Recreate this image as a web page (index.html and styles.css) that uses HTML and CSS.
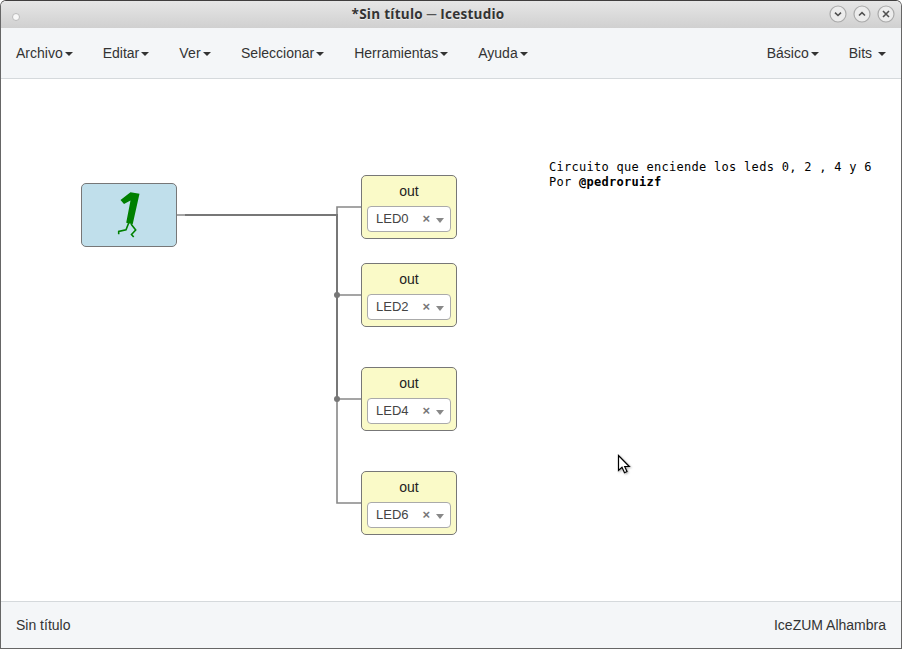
FILE: index.html
```html
<!DOCTYPE html>
<html lang="es">
<head>
<meta charset="utf-8">
<title>*Sin título ─ Icestudio</title>
<link rel="stylesheet" href="styles.css">
</head>
<body>
<div class="window">
  <header class="titlebar">
    <span class="dot"></span>
    <span class="title">*Sin título ─ Icestudio</span>
    <div class="controls">
      <svg class="control" viewBox="0 0 18 18"><circle cx="9" cy="9" r="8"/><path d="M6 7.7l3 2.8 3-2.8"/></svg>
      <svg class="control" viewBox="0 0 18 18"><circle cx="9" cy="9" r="8"/><path d="M6 10.5l3-2.8 3 2.8"/></svg>
      <svg class="control" viewBox="0 0 18 18"><circle cx="9" cy="9" r="8"/><path d="M6 6l6 6M12 6l-6 6"/></svg>
    </div>
  </header>
  <nav class="menubar">
    <a class="item">Archivo<i class="caret"></i></a>
    <a class="item">Editar<i class="caret"></i></a>
    <a class="item view">Ver<i class="caret"></i></a>
    <a class="item">Seleccionar<i class="caret"></i></a>
    <a class="item">Herramientas<i class="caret"></i></a>
    <a class="item">Ayuda<i class="caret"></i></a>
    <span class="spacer"></span>
    <a class="item">Básico<i class="caret"></i></a>
    <a class="item">Bits <i class="caret"></i></a>
  </nav>
  <main class="canvas">
    <svg class="wires" viewBox="0 0 900 522">
      <path d="M184 136H336"/>
      <path class="thin" d="M176 136H184M336 136V128H360M336 216H360M336 320H360M336 320V424H360"/>
      <path d="M336 135V320"/>
      <circle cx="336" cy="216" r="3"/>
      <circle cx="336" cy="320" r="3"/>
    </svg>
    <div class="block constant">
      <svg class="one" viewBox="0 0 40 54">
        <path class="digit" d="M10.5 12L20.5 4.2L29.5 5.7L22.7 36.3L16.2 34.7L20.5 12.5L14 16Z"/>
        <path class="leg" d="M18.7 35L16 41.8L8.7 43.5V46.3M21 36L25.7 42L21.5 46.5L23.7 49"/>
      </svg>
    </div>
    <div class="block output led0"><span class="name">out</span><div class="select"><span class="value">LED0</span><span class="clear">×</span><i class="arrow"></i></div></div>
    <div class="block output led2"><span class="name">out</span><div class="select"><span class="value">LED2</span><span class="clear">×</span><i class="arrow"></i></div></div>
    <div class="block output led4"><span class="name">out</span><div class="select"><span class="value">LED4</span><span class="clear">×</span><i class="arrow"></i></div></div>
    <div class="block output led6"><span class="name">out</span><div class="select"><span class="value">LED6</span><span class="clear">×</span><i class="arrow"></i></div></div>
    <div class="note">Circuito que enciende los leds 0, 2 , 4 y 6<br>Por <b>@pedroruizf</b></div>
    <svg class="cursor" viewBox="0 0 16 22"><path d="M1.5 1.5V16.5L5 13.3L7.5 18.7L10 17.5L7.7 12.5H12.3Z"/></svg>
  </main>
  <footer class="statusbar"><span>Sin título</span><span>IceZUM Alhambra</span></footer>
</div>
</body>
</html>
```
FILE: styles.css
```css
* { box-sizing: border-box; }
body {
  margin: 0;
  background: #fff;
  font: 14px/20px "Liberation Sans", Arial, sans-serif;
  color: #333;
}
.window {
  display: flex;
  flex-direction: column;
  width: 902px;
  height: 649px;
  border: 1px solid #666;
  border-top-color: #403e3e;
  border-radius: 6px 6px 0 0;
  overflow: hidden;
}
.titlebar {
  display: flex;
  align-items: center;
  height: 27px;
  padding: 0 6px 0 11px;
  background: linear-gradient(#e6e6e6, #d0d0d0);
}
.dot {
  width: 8px;
  height: 8px;
  margin-top: 5px;
  border: 1px solid #bbb;
  border-radius: 50%;
  background: #f8f8f8;
}
.title {
  flex: 1;
  padding-left: 7px;
  text-align: center;
  font: 700 13.5px/27px "Open Sans", "Noto Sans", sans-serif;
  letter-spacing: 0.26px;
  height: 27px;
  color: #333;
  white-space: nowrap;
  text-shadow: 0 1px #eee;
}
.controls { display: flex; gap: 6px; padding-bottom: 1px; }
.control { width: 18px; height: 18px; fill: #ececec; stroke: #aaa; stroke-width: 1.2; }
.control path { fill: none; stroke: #505050; stroke-width: 1.6; }
.menubar {
  display: flex;
  align-items: center;
  height: 51px;
  border-bottom: 1px solid #d5d9dc;
  background: #f4f6f8;
}
.item { padding: 0 15px; white-space: pre; }
.view { letter-spacing: 0.25px; }
.spacer { flex: 1; }
.caret {
  display: inline-block;
  margin-left: 2px;
  vertical-align: middle;
  border-top: 4px solid #333;
  border-right: 4px solid transparent;
  border-left: 4px solid transparent;
}
.canvas { position: relative; flex: 1; background: #fff; }
.wires { position: absolute; inset: 0; width: 900px; height: 522px; fill: none; stroke: #777; stroke-width: 2; }
.wires .thin { stroke: #888; stroke-width: 1.6; }
.wires circle { fill: #777; stroke: none; }
.block { position: absolute; width: 96px; height: 64px; border: 1px solid #777; border-radius: 5px; }
.constant { left: 80px; top: 104px; background: #c0dfeb; }
.one { display: block; width: 40px; height: 54px; margin: 4px 0 0 28px; }
.digit { fill: green; }
.leg { fill: none; stroke: green; stroke-width: 1.6; }
.output { display: flex; flex-direction: column; padding: 5px; background: #fafac8; color: #222; }
.led0 { left: 360px; top: 96px; }
.led2 { left: 360px; top: 184px; }
.led4 { left: 360px; top: 288px; }
.led6 { left: 360px; top: 392px; }
.name { height: 25px; text-align: center; }
.select {
  display: flex;
  align-items: center;
  height: 26px;
  padding: 0 6px 0 8px;
  border: 1px solid #aaa;
  border-radius: 4px;
  background: #fff;
  font-size: 13px;
  color: #444;
}
.value { flex: 1; }
.clear { margin-right: 6px; font-weight: bold; color: #777; }
.arrow { margin-top: 3px; border-top: 5px solid #888; border-right: 4px solid transparent; border-left: 4px solid transparent; }
.note {
  position: absolute;
  left: 548px;
  top: 81px;
  font: 12px/15px "DejaVu Sans Mono", monospace;
  letter-spacing: 0.28px;
  color: #000;
  white-space: nowrap;
}
.cursor { position: absolute; left: 616px; top: 375px; width: 16px; height: 22px; fill: #fff; stroke: #000; stroke-width: 1.2; filter: drop-shadow(1px 1px 1px #0005); }
.statusbar {
  display: flex;
  align-items: center;
  justify-content: space-between;
  height: 47px;
  padding: 0 15px;
  border-top: 1px solid #d5d9dc;
  background: #f4f6f8;
}
```
